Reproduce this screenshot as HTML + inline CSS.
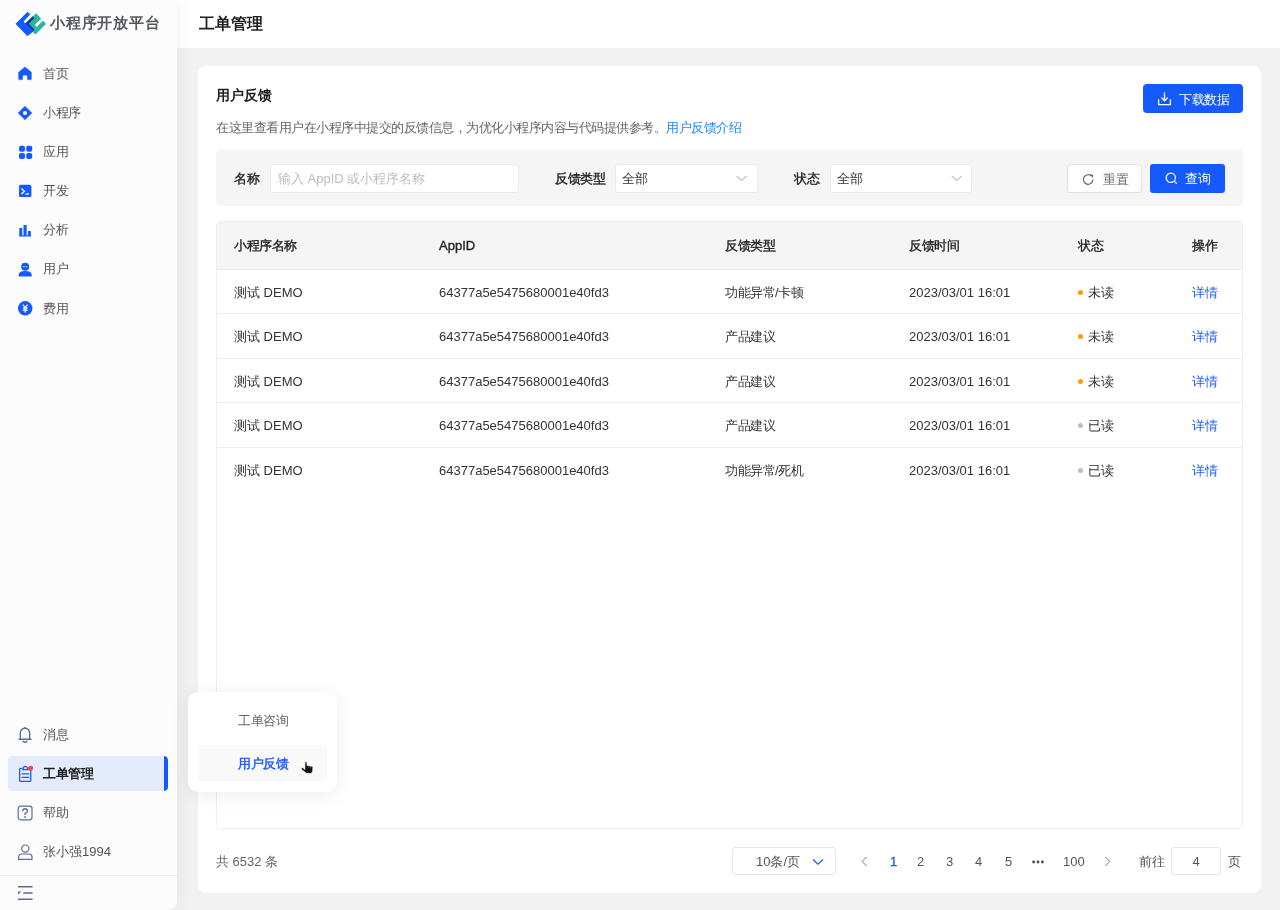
<!DOCTYPE html>
<html><head><meta charset="utf-8">
<style>
*{box-sizing:border-box;margin:0;padding:0}
html,body{width:1280px;height:910px;overflow:hidden}
#side,#hdr,#card,#pop{will-change:transform}
body{font-family:"Liberation Sans",sans-serif;font-size:13px;color:#222;background:#f2f2f2;position:relative}
.a{position:absolute;white-space:nowrap}
#side{position:absolute;left:0;top:0;width:177px;height:910px;background:#fcfcfc;border-radius:0 9px 9px 0;box-shadow:3px 0 16px rgba(0,0,0,0.05);z-index:3}
#hdr{position:absolute;left:160px;top:0;width:1120px;height:48px;background:#fff;z-index:1}
#card{position:absolute;left:198px;top:66px;width:1063px;height:827px;background:#fff;border-radius:8px;z-index:2}
.mt{position:absolute;left:43px;font-size:13px;line-height:17px;color:#555;letter-spacing:-0.5px}
.ic{position:absolute;left:17px;width:16px;height:16px}
.fb{position:absolute;left:18px;top:84px;width:1027px;height:56px;background:#f5f5f5;border-radius:4px}
.inp{position:absolute;background:#fff;border:1px solid #ececec;border-radius:3px;height:28.5px}
.lbl{position:absolute;font-weight:normal;-webkit-text-stroke:0.35px #222;color:#222;line-height:17px;letter-spacing:-0.5px}
#tbl{position:absolute;left:18px;top:155px;width:1027px;height:608px;border:1px solid #eceef0;border-radius:4px;overflow:hidden}
.th{position:absolute;left:0;top:0;width:100%;height:47px;background:#f5f5f5}
.row{position:absolute;left:0;width:100%;height:44.6px;border-top:1px solid #eeeeee}
.c{position:absolute;line-height:17px;color:#333;white-space:nowrap}
.th .c{font-weight:normal;-webkit-text-stroke:0.35px #222;color:#222;top:14.5px;letter-spacing:-0.4px}
.cj{letter-spacing:-0.5px}
.row .c{top:14px}
.dot{display:inline-block;width:5px;height:5px;border-radius:50%;margin-right:5px;vertical-align:2px}
.pg{position:absolute;top:853px;line-height:17px;color:#555;white-space:nowrap}
</style></head><body>
<div id="side">
  <svg class="a" style="left:14px;top:10px" width="34" height="28" viewBox="0 0 1105 910">
    <path d="M720,135 L1015,450 L700,770 L380,450 Z" fill="#2bb59c" stroke="#2bb59c" stroke-width="40" stroke-linejoin="round"/>
    <line x1="735" y1="490" x2="980" y2="245" stroke="#fcfcfc" stroke-width="95" stroke-linecap="round"/>
    <path d="M360,450 L605,205 L660,270 L482,447 L665,630 L605,695 Z" fill="#0b3aa8"/>
    <path d="M75,450 L440,85 L500,140 L285,378 L360,450 L605,695 L440,825 Z" fill="#155aff" stroke="#155aff" stroke-width="40" stroke-linejoin="round"/>
  </svg>
  <div class="a" style="left:50px;top:13px;font-size:15px;font-weight:bold;color:#55595f;line-height:20px;letter-spacing:0.8px">小程序开放平台</div>

  <!-- menu -->
  <svg class="ic" style="top:65px" viewBox="0 0 16 16"><path d="M8,2 L14.3,7.3 L14.3,14 Q14.3,14.6 13.7,14.6 L10.5,14.6 L10.5,11 Q10.5,10 8,10 Q5.5,10 5.5,11 L5.5,14.6 L2.3,14.6 Q1.7,14.6 1.7,14 L1.7,7.3 Z" fill="#155aff" stroke="#155aff" stroke-width="0.6" stroke-linejoin="round"/></svg>
  <div class="mt" style="top:65px">首页</div>

  <svg class="ic" style="top:104.5px" viewBox="0 0 16 16"><path d="M8,1.4 L14.6,8 L8,14.6 L1.4,8 Z" fill="#155aff" stroke="#155aff" stroke-width="1" stroke-linejoin="round"/><circle cx="8" cy="8" r="2" fill="#fff"/></svg>
  <div class="mt" style="top:104px">小程序</div>

  <svg class="ic" style="top:144px" viewBox="0 0 16 16"><rect x="2" y="1.7" width="6" height="6" rx="1.9" fill="#155aff"/><rect x="9.2" y="1.7" width="6" height="6" rx="1.9" fill="#155aff"/><rect x="2" y="8.9" width="6" height="6" rx="1.9" fill="#155aff"/><rect x="9.2" y="8.9" width="6" height="6" rx="1.9" fill="#155aff"/></svg>
  <div class="mt" style="top:143px">应用</div>

  <svg class="ic" style="top:183px" viewBox="0 0 16 16"><rect x="2" y="1.8" width="12.4" height="12.2" rx="1.6" fill="#155aff"/><polyline points="4.4,5.4 7.4,8.2 4.4,11" fill="none" stroke="#fff" stroke-width="1.3"/><line x1="8.5" y1="11" x2="12" y2="11" stroke="#fff" stroke-width="1.3"/></svg>
  <div class="mt" style="top:182px">开发</div>

  <svg class="ic" style="top:222px" viewBox="0 0 16 16"><rect x="2.3" y="6" width="3" height="8" rx="0.4" fill="#155aff"/><rect x="6.5" y="3" width="3.2" height="11" rx="0.4" fill="#155aff"/><rect x="10.9" y="8.9" width="3" height="5.2" rx="0.4" fill="#155aff"/><rect x="2.2" y="13.3" width="11.8" height="1.2" fill="#155aff"/></svg>
  <div class="mt" style="top:221px">分析</div>

  <svg class="ic" style="top:261px" viewBox="0 0 16 16"><circle cx="8.2" cy="5.8" r="4" fill="#155aff"/><rect x="6.3" y="5.2" width="1.3" height="1" fill="#fff"/><rect x="8.8" y="5.2" width="1.3" height="1" fill="#fff"/><path d="M1.7,15.5 L1.7,13.8 Q1.7,10 8.2,10 Q14.7,10 14.7,13.8 L14.7,15.5 Z" fill="#155aff"/></svg>
  <div class="mt" style="top:260px">用户</div>

  <svg class="ic" style="top:300px" viewBox="0 0 16 16"><circle cx="8.2" cy="8.3" r="7.2" fill="#155aff"/><path d="M5.8,4.6 L8.2,7.6 L10.6,4.6 M8.2,7.6 L8.2,12.5 M5.8,8.2 L10.6,8.2 M5.8,10.2 L10.6,10.2" fill="none" stroke="#fff" stroke-width="1.2"/></svg>
  <div class="mt" style="top:300px">费用</div>

  <!-- bottom -->
  <svg class="ic" style="top:725px;width:18px;height:19px;left:16px" viewBox="0 0 18 19"><path d="M3,14.2 L15,14.2 M4.3,14.2 L4.3,8.6 Q4.3,3.4 9,3.4 Q13.7,3.4 13.7,8.6 L13.7,14.2 M7.1,16.3 Q9,18.4 10.9,16.3 M7.8,3.6 Q9,1.6 10.2,3.6" fill="none" stroke="#5b6e96" stroke-width="1.35" stroke-linecap="round" stroke-linejoin="round"/></svg>
  <div class="mt" style="top:726px">消息</div>

  <div class="a" style="left:8px;top:756px;width:160px;height:35px;background:#e4ebfd;border-radius:4px;overflow:hidden"><div class="a" style="right:0;top:0;width:4px;height:35px;background:#155aff;border-radius:0 4px 4px 0"></div></div>
  <svg class="ic" style="top:765px;height:18px" viewBox="0 0 16 18"><path d="M5.2,3.4 L3.4,3.4 Q2.65,3.4 2.65,4.15 L2.65,15.6 Q2.65,16.35 3.4,16.35 L13,16.35 Q13.75,16.35 13.75,15.6 L13.75,4.15 Q13.75,3.4 13,3.4 L11.4,3.4" fill="none" stroke="#155aff" stroke-width="1.3"/><path d="M5.6,4.7 L11,4.7 L9.9,2.3 Q8.3,0.6 6.7,2.3 Z" fill="none" stroke="#155aff" stroke-width="1.3" stroke-linejoin="round"/><path d="M5.1,8.9 L11.7,8.9 M5.1,12.3 L11.7,12.3" stroke="#155aff" stroke-width="1.3" stroke-linecap="round"/><circle cx="13.6" cy="3.3" r="2.6" fill="#f54a4a"/></svg>
  <div class="mt" style="top:765px;font-weight:bold;color:#1f1f1f">工单管理</div>

  <svg class="ic" style="top:805px" viewBox="0 0 16 16"><rect x="1.2" y="1.2" width="13.8" height="13.6" rx="2.2" fill="none" stroke="#5b6e96" stroke-width="1.2"/><path d="M5.8,6.2 Q5.8,3.7 8.1,3.7 Q10.4,3.7 10.4,5.9 Q10.4,7.3 8.1,8.4 L8.1,9.9" fill="none" stroke="#5b6e96" stroke-width="1.35"/><circle cx="8.1" cy="12" r="0.9" fill="#5b6e96"/></svg>
  <div class="mt" style="top:804px">帮助</div>

  <svg class="ic" style="top:844px" viewBox="0 0 16 16"><circle cx="8.3" cy="4.6" r="3.6" fill="none" stroke="#5b6e96" stroke-width="1.2"/><path d="M1.6,15.4 L1.6,13.3 Q1.6,10 5,10 L11.6,10 Q15,10 15,13.3 L15,15.4 Z" fill="none" stroke="#5b6e96" stroke-width="1.2" stroke-linejoin="round"/></svg>
  <div class="mt" style="top:843px;letter-spacing:0">张小强1994</div>

  <div class="a" style="left:0;top:875px;width:177px;height:1px;background:#eeeeee"></div>
  <svg class="ic" style="top:885px" viewBox="0 0 16 16"><path d="M1,1.7 L15.6,1.7 M6.2,8 L15.6,8 M1,14.3 L15.6,14.3" stroke="#5b6e96" stroke-width="1.5"/><path d="M1,6.6 L4.2,6.6 L1,9.8 Z" fill="#5b6e96"/></svg>
</div>

<div id="hdr"><div class="a" style="left:39px;top:14px;font-size:16px;font-weight:bold;color:#1f1f1f;line-height:20px">工单管理</div></div>

<div id="card">
  <div class="a" style="left:18px;top:20px;font-size:14.2px;font-weight:bold;color:#1f1f1f;line-height:18px">用户反馈</div>
  <div class="a" style="left:18px;top:53px;color:#666;line-height:17px;letter-spacing:-0.5px">在这里查看用户在小程序中提交的反馈信息，为优化小程序内容与代码提供参考。<span style="color:#1e88ff">用户反馈介绍</span></div>
  <div class="a" style="left:945px;top:18px;width:100px;height:29px;background:#155aff;border-radius:4px">
    <svg class="a" style="left:14px;top:8px" width="15" height="14" viewBox="0 0 15 14"><path d="M7.5,1 L7.5,8.8 M4.6,5.9 L7.5,8.8 L10.4,5.9 M1.6,7.8 L1.6,12.6 L13.4,12.6 L13.4,7.8" fill="none" stroke="#fff" stroke-width="1.3" stroke-linejoin="round" stroke-linecap="round"/></svg>
    <div class="a" style="left:36px;top:6.5px;color:#fff;line-height:17px;letter-spacing:-0.5px">下载数据</div>
  </div>

  <div class="fb">
    <div class="lbl" style="left:18px;top:20px">名称</div>
    <div class="inp" style="left:54px;top:14px;width:249px"><div class="a" style="left:7px;top:5px;color:#bdbdbd;line-height:17px">输入 AppID 或小程序名称</div></div>
    <div class="lbl" style="left:339px;top:20px">反馈类型</div>
    <div class="inp" style="left:399px;top:14px;width:143px"><div class="a" style="left:6px;top:5px;color:#333;line-height:17px">全部</div>
      <svg class="a" style="left:120px;top:10px" width="12" height="8" viewBox="0 0 12 8"><polyline points="0.8,1 5.5,5.5 10.5,1" fill="none" stroke="#c0c4cc" stroke-width="1.1"/></svg></div>
    <div class="lbl" style="left:578px;top:20px">状态</div>
    <div class="inp" style="left:614px;top:14px;width:142px"><div class="a" style="left:6px;top:5px;color:#333;line-height:17px">全部</div>
      <svg class="a" style="left:120px;top:10px" width="12" height="8" viewBox="0 0 12 8"><polyline points="0.8,1 5.5,5.5 10.5,1" fill="none" stroke="#c0c4cc" stroke-width="1.1"/></svg></div>
    <div class="a" style="left:851px;top:14px;width:75px;height:29px;background:#fff;border:1px solid #dcdfe6;border-radius:3px">
      <svg class="a" style="left:14px;top:8px" width="13" height="13" viewBox="0 0 13 13"><path d="M11,6.5 A4.8,4.8 0 1 1 9.6,3.1" fill="none" stroke="#666" stroke-width="1.2"/><path d="M8,1.2 L11.2,1.8 L10.6,5 Z" fill="#666"/></svg>
      <div class="a" style="left:35px;top:6px;color:#666;line-height:17px;letter-spacing:-0.5px">重置</div>
    </div>
    <div class="a" style="left:934px;top:14px;width:75px;height:29px;background:#155aff;border-radius:3px">
      <svg class="a" style="left:15px;top:8px" width="13" height="13" viewBox="0 0 13 13"><circle cx="5.8" cy="5.8" r="4.6" fill="none" stroke="#fff" stroke-width="1.2"/><line x1="9.2" y1="9.2" x2="11.4" y2="11.4" stroke="#fff" stroke-width="1.2" stroke-linecap="round"/></svg>
      <div class="a" style="left:35px;top:6px;color:#fff;line-height:17px;letter-spacing:-0.5px">查询</div>
    </div>
  </div>

  <div id="tbl">
    <div class="th">
      <div class="c" style="left:17px">小程序名称</div>
      <div class="c" style="left:222px;letter-spacing:0">AppID</div>
      <div class="c" style="left:508px">反馈类型</div>
      <div class="c" style="left:692px">反馈时间</div>
      <div class="c" style="left:861px">状态</div>
      <div class="c" style="left:975px">操作</div>
    </div>
    <div class="row" style="top:46.8px">
      <div class="c" style="left:17px">测试 DEMO</div>
      <div class="c" style="left:222px">64377a5e5475680001e40fd3</div>
      <div class="c cj" style="left:508px">功能异常/卡顿</div>
      <div class="c" style="left:692px">2023/03/01 16:01</div>
      <div class="c" style="left:861px"><span class="dot" style="background:#ff9a00"></span>未读</div>
      <div class="c cj" style="left:975px;color:#1f5eff">详情</div>
    </div>
    <div class="row" style="top:91.3px">
      <div class="c" style="left:17px">测试 DEMO</div>
      <div class="c" style="left:222px">64377a5e5475680001e40fd3</div>
      <div class="c cj" style="left:508px">产品建议</div>
      <div class="c" style="left:692px">2023/03/01 16:01</div>
      <div class="c" style="left:861px"><span class="dot" style="background:#ff9a00"></span>未读</div>
      <div class="c cj" style="left:975px;color:#1f5eff">详情</div>
    </div>
    <div class="row" style="top:135.8px">
      <div class="c" style="left:17px">测试 DEMO</div>
      <div class="c" style="left:222px">64377a5e5475680001e40fd3</div>
      <div class="c cj" style="left:508px">产品建议</div>
      <div class="c" style="left:692px">2023/03/01 16:01</div>
      <div class="c" style="left:861px"><span class="dot" style="background:#ff9a00"></span>未读</div>
      <div class="c cj" style="left:975px;color:#1f5eff">详情</div>
    </div>
    <div class="row" style="top:180.3px">
      <div class="c" style="left:17px">测试 DEMO</div>
      <div class="c" style="left:222px">64377a5e5475680001e40fd3</div>
      <div class="c cj" style="left:508px">产品建议</div>
      <div class="c" style="left:692px">2023/03/01 16:01</div>
      <div class="c" style="left:861px"><span class="dot" style="background:#bdbdbd"></span>已读</div>
      <div class="c cj" style="left:975px;color:#1f5eff">详情</div>
    </div>
    <div class="row" style="top:224.8px">
      <div class="c" style="left:17px">测试 DEMO</div>
      <div class="c" style="left:222px">64377a5e5475680001e40fd3</div>
      <div class="c cj" style="left:508px">功能异常/死机</div>
      <div class="c" style="left:692px">2023/03/01 16:01</div>
      <div class="c" style="left:861px"><span class="dot" style="background:#bdbdbd"></span>已读</div>
      <div class="c cj" style="left:975px;color:#1f5eff">详情</div>
    </div>
  </div>

  <div class="pg" style="left:18px;top:787px;color:#666">共 6532 条</div>
  <div class="a" style="left:534px;top:781px;width:104px;height:28px;border:1px solid #e3e5ea;border-radius:3px">
    <div class="a" style="left:23px;top:5px;color:#555;line-height:17px">10条/页</div>
    <svg class="a" style="left:79px;top:10px" width="13" height="8" viewBox="0 0 13 8"><polyline points="1,1.5 6,6.2 11,1.5" fill="none" stroke="#155aff" stroke-width="1.2"/></svg>
  </div>
  <svg class="a" style="left:663px;top:790px" width="7" height="11" viewBox="0 0 7 11"><polyline points="5.5,1 1.3,5.5 5.5,10" fill="none" stroke="#777" stroke-width="1"/></svg>
  <div class="pg" style="left:692px;top:787px;color:#155aff;-webkit-text-stroke:0.3px #155aff">1</div>
  <div class="pg" style="left:719px;top:787px">2</div>
  <div class="pg" style="left:748px;top:787px">3</div>
  <div class="pg" style="left:777px;top:787px">4</div>
  <div class="pg" style="left:807px;top:787px">5</div>
  <svg class="a" style="left:834px;top:794px" width="12" height="4" viewBox="0 0 12 4"><circle cx="1.6" cy="2" r="1.4" fill="#444"/><circle cx="6" cy="2" r="1.4" fill="#444"/><circle cx="10.4" cy="2" r="1.4" fill="#444"/></svg>
  <div class="pg" style="left:865px;top:787px">100</div>
  <svg class="a" style="left:906px;top:790px" width="7" height="11" viewBox="0 0 7 11"><polyline points="1.5,1 5.7,5.5 1.5,10" fill="none" stroke="#777" stroke-width="1"/></svg>
  <div class="pg" style="left:941px;top:787px">前往</div>
  <div class="a" style="left:973px;top:781px;width:50px;height:28px;border:1px solid #e3e5ea;border-radius:3px;text-align:center;line-height:28px;color:#555">4</div>
  <div class="pg" style="left:1030px;top:787px">页</div>
</div>

<div id="pop" class="a" style="left:188px;top:692px;width:149px;height:100px;background:#fff;border-radius:10px;box-shadow:0 3px 20px rgba(0,0,0,0.075);z-index:5">
  <div class="a" style="left:50px;top:20px;color:#666;line-height:17px;letter-spacing:-0.5px">工单咨询</div>
  <div class="a" style="left:10px;top:53px;width:129px;height:36px;background:#f9f9f9;border-radius:4px"></div>
  <div class="a" style="left:50px;top:63px;color:#155aff;font-weight:normal;-webkit-text-stroke:0.4px #155aff;line-height:17px;letter-spacing:-0.5px">用户反馈</div>
  <svg class="a" style="left:112px;top:68px" width="15" height="16" viewBox="0 0 15 16"><path d="M4.9,2.6 Q5.95,0.8 7.0,2.6 L7.0,5.3 L12,6.3 Q12.9,6.6 12.9,7.6 L12.7,11.2 Q12.4,13.4 10.5,13.4 L7.4,13.4 Q6.1,13.4 5.3,12.5 L1.6,9.5 Q0.9,8.5 1.9,7.8 Q2.6,7.4 3.3,8 L4.9,9.4 Z" fill="#141414" stroke="#fff" stroke-width="0.7" stroke-linejoin="round"/><path d="M8.6,6.2 L8.6,7.6 M10.3,6.6 L10.3,7.9" stroke="#fff" stroke-width="0.3"/></svg>
</div>
</body></html>
